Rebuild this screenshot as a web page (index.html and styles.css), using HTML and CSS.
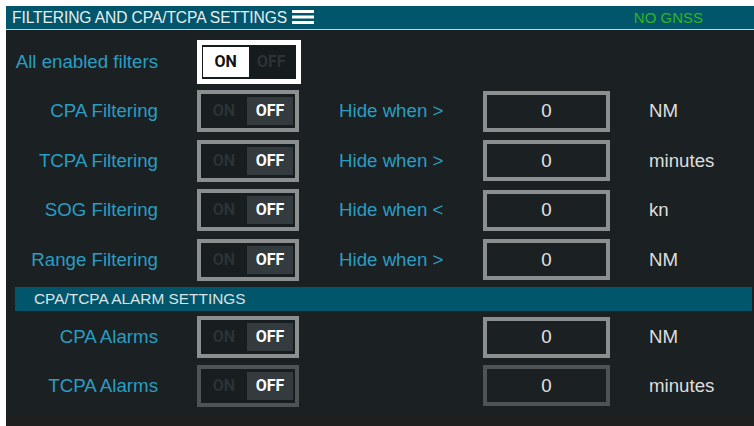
FILE: index.html
```html
<!DOCTYPE html>
<html lang="en">
<head>
<meta charset="utf-8">
<title>Filtering and CPA/TCPA settings</title>
<link rel="stylesheet" href="styles.css">
</head>
<body>
<div class="screen">
  <header class="titlebar">
    <span class="title">FILTERING AND CPA/TCPA SETTINGS</span>
    <svg class="menu-icon" width="22" height="14" viewBox="0 0 22 14" aria-hidden="true">
      <rect x="0" y="0" width="22" height="3" fill="#ffffff"/>
      <rect x="0" y="5.5" width="22" height="3" fill="#ffffff"/>
      <rect x="0" y="11" width="22" height="3" fill="#ffffff"/>
    </svg>
    <span class="status">NO GNSS</span>
  </header>

  <main class="panel">
    <div class="grid filters">
      <div class="label">All enabled filters</div>
      <div class="cell"><div class="toggle focused"><span class="opt lit">ON</span><span class="opt">OFF</span></div></div>
      <div></div><div></div><div></div>

      <div class="label">CPA Filtering</div>
      <div class="cell"><div class="toggle"><span class="opt">ON</span><span class="opt sel">OFF</span></div></div>
      <div class="cond">Hide when &gt;</div>
      <div class="cell"><div class="value">0</div></div>
      <div class="unit">NM</div>

      <div class="label">TCPA Filtering</div>
      <div class="cell"><div class="toggle"><span class="opt">ON</span><span class="opt sel">OFF</span></div></div>
      <div class="cond">Hide when &gt;</div>
      <div class="cell"><div class="value">0</div></div>
      <div class="unit">minutes</div>

      <div class="label">SOG Filtering</div>
      <div class="cell"><div class="toggle"><span class="opt">ON</span><span class="opt sel">OFF</span></div></div>
      <div class="cond">Hide when &lt;</div>
      <div class="cell"><div class="value">0</div></div>
      <div class="unit">kn</div>

      <div class="label">Range Filtering</div>
      <div class="cell"><div class="toggle"><span class="opt">ON</span><span class="opt sel">OFF</span></div></div>
      <div class="cond">Hide when &gt;</div>
      <div class="cell"><div class="value">0</div></div>
      <div class="unit">NM</div>
    </div>

    <div class="section">CPA/TCPA ALARM SETTINGS</div>

    <div class="grid alarms">
      <div class="label">CPA Alarms</div>
      <div class="cell"><div class="toggle"><span class="opt">ON</span><span class="opt sel">OFF</span></div></div>
      <div></div>
      <div class="cell"><div class="value">0</div></div>
      <div class="unit">NM</div>

      <div class="label">TCPA Alarms</div>
      <div class="cell"><div class="toggle dim"><span class="opt">ON</span><span class="opt sel">OFF</span></div></div>
      <div></div>
      <div class="cell"><div class="value dim">0</div></div>
      <div class="unit">minutes</div>
    </div>
  </main>

  <footer class="bottom"></footer>
</div>
</body>
</html>
```

FILE: styles.css
```css
* { box-sizing: border-box; }

html, body {
  margin: 0;
  padding: 0;
  background: #ffffff;
}

body {
  font-family: "Liberation Sans", Arial, sans-serif;
  width: 754px;
  height: 426px;
  overflow: hidden;
}

.screen {
  margin: 6px 0 0 6px;
  height: 420px;
  display: flex;
  flex-direction: column;
}

/* title bar */
.titlebar {
  height: 24px;
  background: #01566b;
  border-bottom: 1px solid #c9d3d6;
  display: flex;
  align-items: center;
  padding-left: 6px;
  color: #e8eef0;
  font-size: 15.6px;
}

.title {
  line-height: 1;
  letter-spacing: -0.1px;
}

.menu-icon {
  margin-left: 5px;
  margin-top: -1px;
}

.status {
  margin-left: auto;
  margin-right: 51px;
  color: #33b521;
  line-height: 1;
  font-size: 15px;
}

/* main panel */
.panel {
  height: 385px;
  background: #1b2123;
  padding-top: 7px;
}

.grid {
  display: grid;
  grid-template-columns: 191px 142px 144px 166px 1fr;
  align-items: center;
}

.filters { grid-auto-rows: 49.5px; }

.alarms {
  grid-auto-rows: 48.5px;
  margin-top: 2px;
}

.label {
  text-align: right;
  padding-right: 39px;
  color: #2a9dc2;
  font-size: 18.7px;
  white-space: nowrap;
}

.cond {
  color: #2a9dc2;
  font-size: 18.7px;
  white-space: nowrap;
}

.unit {
  color: #dedede;
  font-size: 18.7px;
}

.cell {
  display: flex;
  align-items: center;
}

/* on/off switch */
.toggle {
  width: 102px;
  height: 42px;
  border: 4px solid #8b8f90;
  background: #181d1f;
  padding: 3px 2px 3px 0;
  display: flex;
  font-family: Roboto, "Liberation Sans", sans-serif;
  font-weight: 700;
  font-size: 16px;
}

.toggle.focused {
  width: 104px;
  height: 44px;
  border: 5px solid #ffffff;
  background: #161b1d;
  padding: 2px 2px 2px 1px;
}

.toggle.dim { border-color: #4e5456; }

.opt {
  flex: 1;
  display: flex;
  align-items: center;
  justify-content: center;
  color: #2b3336;
  line-height: 1;
}

.opt.sel {
  background: #343b3e;
  color: #ffffff;
}

.opt.lit {
  background: #ffffff;
  color: #111111;
}

/* numeric value box */
.value {
  width: 127px;
  height: 41px;
  border: 4px solid #8b8f90;
  display: flex;
  align-items: center;
  justify-content: center;
  color: #e4e4e4;
  font-size: 18.7px;
}

.value.dim { border-color: #4e5456; }

/* section band */
.section {
  margin: 2.5px 2px 0 9px;
  height: 24px;
  background: #01566b;
  color: #dbe3e5;
  font-size: 15.4px;
  padding-left: 19px;
  display: flex;
  align-items: center;
}

.bottom {
  height: 11px;
  background: #1f1f1f;
}
```
